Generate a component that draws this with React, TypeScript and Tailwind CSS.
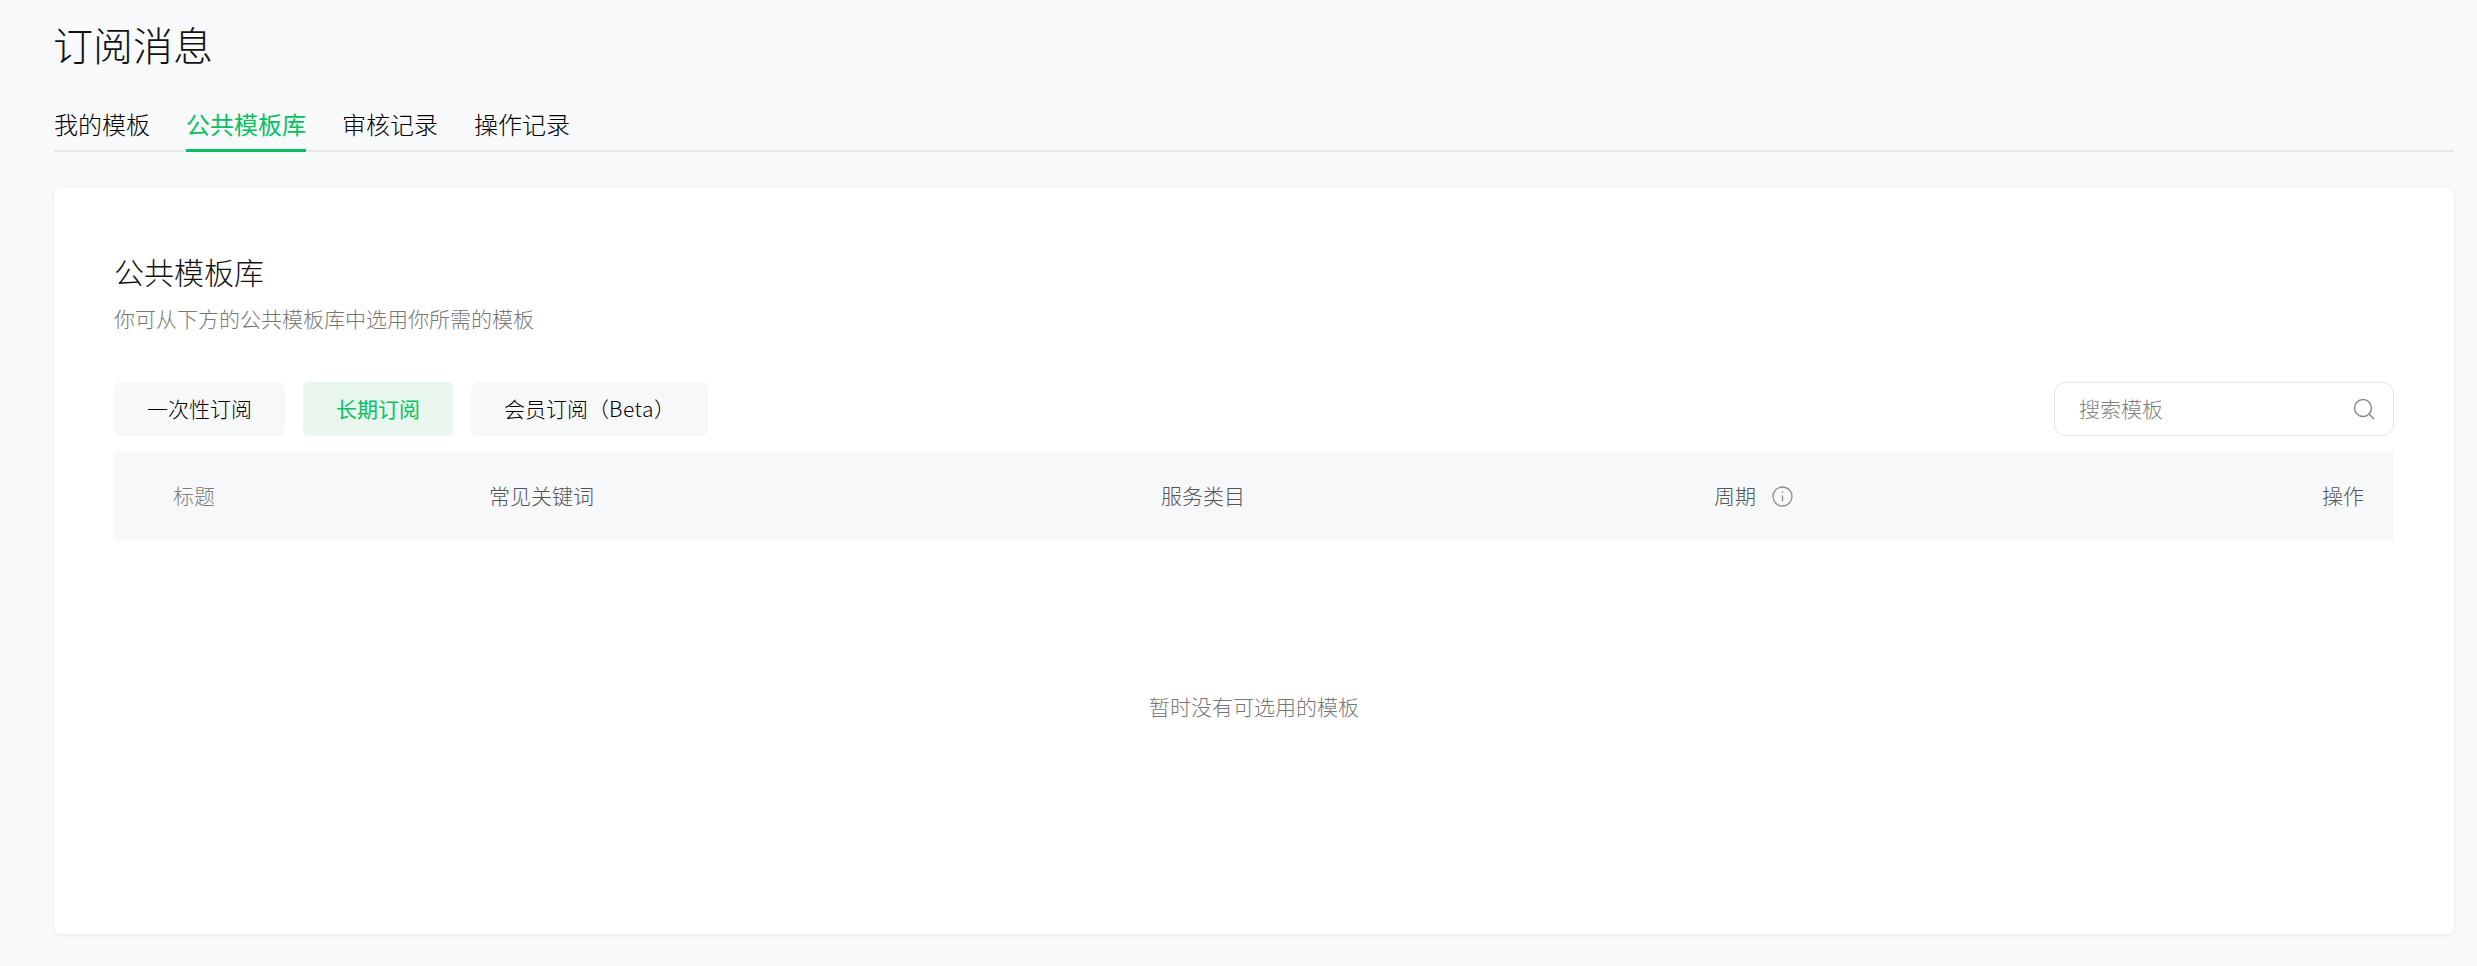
const tabs = ["我的模板", "公共模板库", "审核记录", "操作记录"];

export default function App() {
  return (
    <main
      className="h-[966px] overflow-hidden bg-[#f8f9fb] pl-[54px] pr-[23px] pt-[16px]"
      style={{ fontFamily: '"Noto Sans CJK SC", "Noto Sans", sans-serif' }}
    >
      <h1 className="-ml-px h-[56px] text-[40px] leading-[56px] font-light text-[#111111]">订阅消息</h1>

      {/* Tabs */}
      <nav className="mt-[26px] flex h-[54px] gap-[36px] border-b-2 border-[#e5e7eb]">
        {tabs.map((tab, idx) => (
          <div
            key={tab}
            className={`-mb-[2px] h-[54px] border-b-[3px] pt-[8px] text-[24px] leading-[36px] ${
              idx === 1 ? "border-[#07c160] font-normal text-[#07c160]" : "border-transparent font-light text-black"
            }`}
          >
            {tab}
          </div>
        ))}
      </nav>

      {/* Card */}
      <section className="mt-[36px] h-[746px] rounded-[6px] bg-white px-[60px] pt-[62px] shadow-[0_1px_4px_rgba(0,0,0,0.07)]">
        <h2 className="text-[30px] leading-[42px] font-light text-[#111111]">公共模板库</h2>
        <p className="mt-[11px] text-[21px] leading-[30px] font-light text-[#777777]">你可从下方的公共模板库中选用你所需的模板</p>

        <div className="mt-[49px] flex items-center justify-between">
          <div className="flex gap-[18px]">
            <button className="h-[54px] rounded-[6px] bg-[#f7f8fa] px-[33px] text-[21px] font-light text-black">一次性订阅</button>
            <button className="h-[54px] rounded-[6px] bg-[#e8f6ee] px-[33px] text-[21px] font-normal text-[#07c160]">长期订阅</button>
            <button className="h-[54px] rounded-[6px] bg-[#f7f8fa] px-[33px] text-[21px] font-light text-black">
              会员订阅（<span className="tracking-[0.5px]">Beta</span>）
            </button>
          </div>
          <div className="flex h-[54px] w-[340px] items-center justify-between rounded-[12px] border border-[#e5e5e5] pl-[24px] pr-[17px]">
            <span className="text-[21px] font-light text-[#808080]">搜索模板</span>
            <svg width="24" height="24" viewBox="0 0 24 24" fill="none" stroke="#8c8c8c" strokeWidth="1.5">
              <circle cx="11" cy="11" r="8.5" />
              <path d="M17 17l5 5" />
            </svg>
          </div>
        </div>

        {/* Table head */}
        <div className="mt-[15px] grid h-[90px] grid-cols-[316px_672px_553px_1fr] items-center bg-[#f7f8fa] pl-[59px] pr-[30px] text-[21px] font-light text-[#555555]">
          <div className="text-[#808080]">标题</div>
          <div>常见关键词</div>
          <div>服务类目</div>
          <div className="flex items-center justify-between">
            <div className="flex items-center gap-[16px]">
              周期
              <svg width="21" height="21" viewBox="0 0 21 21" fill="none" stroke="#8c8c8c" strokeWidth="1.3">
                <circle cx="10.5" cy="10.5" r="9.5" />
                <path d="M10.5 9.5v6M10.5 5.5v1.6" />
              </svg>
            </div>
            <div>操作</div>
          </div>
        </div>

        <div className="mt-[149px] text-center text-[21px] leading-[32px] font-light text-[#777777]">暂时没有可选用的模板</div>
      </section>
    </main>
  );
}
